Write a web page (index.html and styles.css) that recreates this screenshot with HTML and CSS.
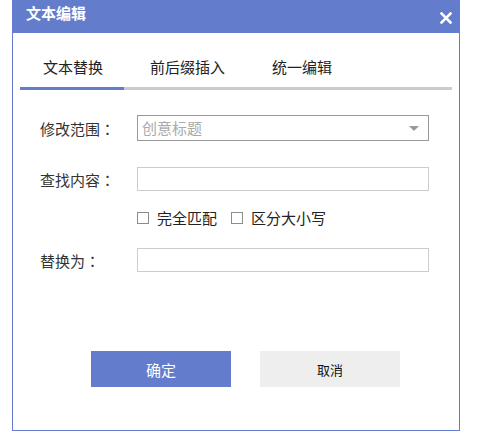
FILE: index.html
```html
<!DOCTYPE html>
<html lang="zh-CN">
<head>
<meta charset="utf-8">
<title>文本编辑</title>
<link rel="stylesheet" href="styles.css">
</head>
<body>
<div class="dialog">
  <div class="header">
    <span class="title">文本编辑</span>
    <svg class="close" width="12" height="12" viewBox="0 0 12 12"><path d="M1.5 1.5 L10.5 10.5 M10.5 1.5 L1.5 10.5" stroke="#fff" stroke-width="2.6" stroke-linecap="square" fill="none"/></svg>
  </div>
  <div class="tabs">
    <div class="tab active">文本替换</div>
    <div class="tab">前后缀插入</div>
    <div class="tab">统一编辑</div>
  </div>
  <div class="form">
    <div class="row row-select">
      <label class="label">修改范围<span class="colon" lang="zh-TW">：</span></label>
      <div class="select">
        <span class="placeholder">创意标题</span>
        <span class="arrow"></span>
      </div>
    </div>
    <div class="row row-find">
      <label class="label">查找内容<span class="colon" lang="zh-TW">：</span></label>
      <div class="input"></div>
    </div>
    <div class="row row-check">
      <span class="check"></span><span class="check-text">完全匹配</span>
      <span class="check check-2"></span><span class="check-text">区分大小写</span>
    </div>
    <div class="row row-replace">
      <label class="label">替换为<span class="colon" lang="zh-TW">：</span></label>
      <div class="input"></div>
    </div>
    <div class="buttons">
      <div class="btn btn-primary">确定</div>
      <div class="btn btn-default">取消</div>
    </div>
  </div>
</div>
</body>
</html>
```

FILE: styles.css
```css
html, body {
  margin: 0;
  padding: 0;
  background: #fff;
}
body {
  font-family: "Noto Sans CJK SC", "Noto Sans", sans-serif;
  font-size: 15px;
  color: #333;
}
.dialog {
  box-sizing: border-box;
  width: 448px;
  height: 431px;
  margin-left: 12px;
  border: 1px solid #637dcc;
  background: #fff;
  display: flex;
  flex-direction: column;
}
.header {
  height: 32px;
  background: #637dcc;
  display: flex;
  justify-content: space-between;
  align-items: flex-start;
  padding: 0 7px 0 13px;
}
.title {
  color: #fff;
  font-weight: bold;
  font-size: 15px;
  line-height: 24px;
}
.close {
  margin-top: 11px;
  display: block;
}
.tabs {
  margin: 24px 7px 0;
  display: flex;
  gap: 3px;
  border-bottom: 3px solid #cbcbcb;
}
.tab {
  padding: 0 21px 10px 23px;
  line-height: 20px;
  color: #222;
  margin-bottom: -3px;
  border-bottom: 3px solid transparent;
}
.tab.active {
  border-bottom-color: #637dcc;
}
.form {
  padding-left: 27px;
  margin-top: 25px;
}
.row {
  display: flex;
  align-items: center;
}
.label {
  width: 97px;
  padding-top: 2px;
  line-height: 20px;
  color: #333;
}
.colon {
  font-family: "Noto Sans CJK TC", "Noto Sans CJK SC", sans-serif;
}
.select {
  box-sizing: border-box;
  width: 292px;
  height: 26px;
  border: 1px solid #999;
  display: flex;
  align-items: center;
  justify-content: space-between;
  padding: 0 9px 0 4px;
}
.placeholder {
  color: #aaa;
  line-height: 20px;
}
.arrow {
  width: 0;
  height: 0;
  border-left: 5.5px solid transparent;
  border-right: 5.5px solid transparent;
  border-top: 5px solid #999;
  margin-top: 1px;
}
.input {
  box-sizing: border-box;
  width: 292px;
  height: 24px;
  border: 1px solid #ccc;
}
.row-find {
  margin-top: 26px;
}
.row-check {
  margin-top: 17px;
  height: 20px;
  padding-left: 97px;
}
.check {
  box-sizing: border-box;
  width: 12px;
  height: 12px;
  border: 1px solid #8c8c8c;
  background: #fff;
  margin-right: 8px;
}
.check-2 {
  margin-left: 14px;
}
.check-text {
  line-height: 20px;
  color: #222;
}
.row-replace {
  margin-top: 20px;
}
.buttons {
  display: flex;
  gap: 29px;
  margin-top: 79px;
  padding-left: 51px;
}
.btn {
  width: 140px;
  height: 36px;
  display: flex;
  align-items: center;
  justify-content: center;
  font-size: 15px;
}
.btn-primary {
  background: #637dcc;
  color: #fff;
}
.btn-default {
  background: #eeeeee;
  color: #111;
  font-size: 13px;
}
```
